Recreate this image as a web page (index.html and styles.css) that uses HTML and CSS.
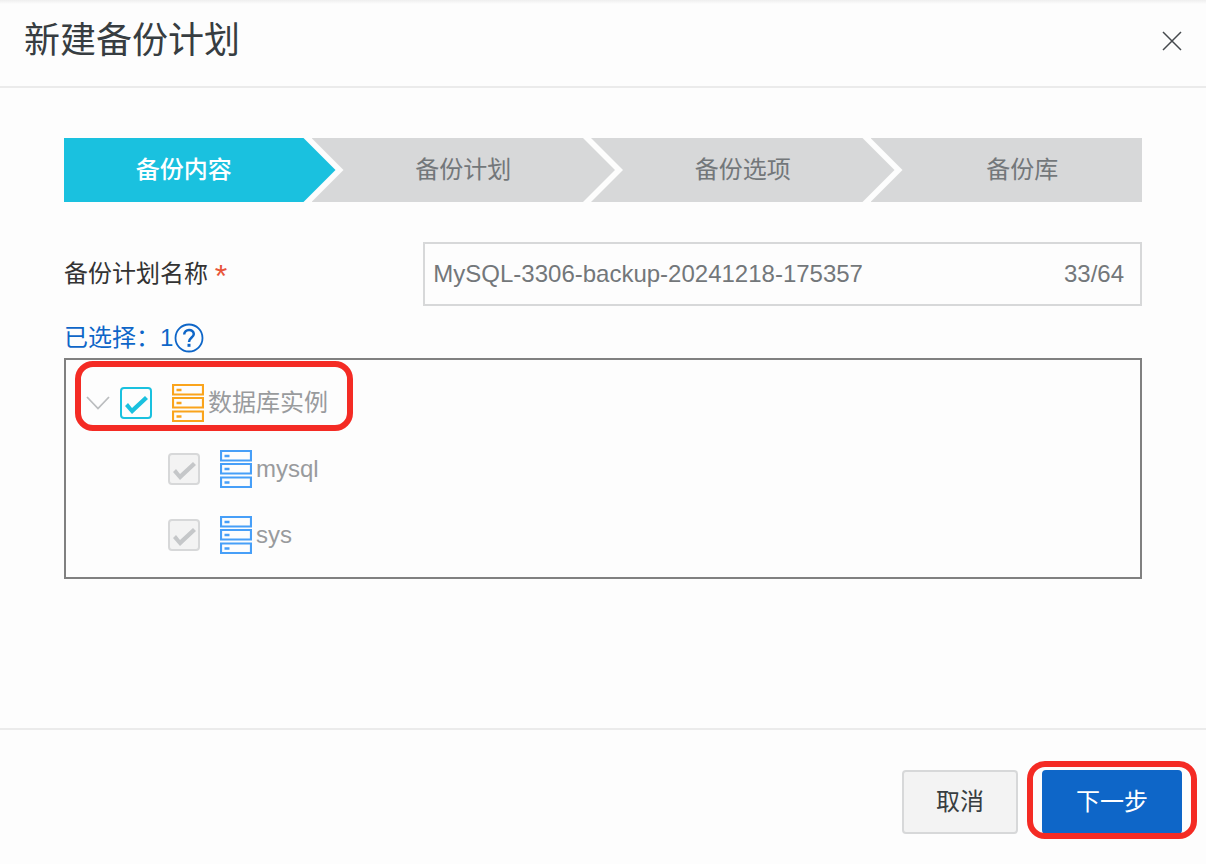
FILE: index.html
```html
<!DOCTYPE html>
<html lang="zh-CN">
<head>
<meta charset="utf-8">
<meta name="viewport" content="width=device-width, initial-scale=1">
<title>新建备份计划</title>
<link rel="stylesheet" href="styles.css">
</head>
<body>
<svg width="0" height="0" class="sprite" aria-hidden="true">
  <symbol id="server" viewBox="0 0 32 38">
    <g fill="none" stroke="currentColor">
      <path d="M1 1H31V10.500H1ZM1 14H31V23.500H1ZM1 27.500H31V37H1Z" stroke-width="2.200"/>
      <path d="M4.500 6H9.500M4.500 19H9.500M4.500 32.500H9.500" stroke-width="2.500"/>
    </g>
  </symbol>
</svg>
<main class="dialog">
  <header class="dialog-header">
    <h1 class="title">新建备份计划</h1>
    <button class="close" type="button" aria-label="关闭">
      <svg width="20" height="20" viewBox="0 0 20 20"><path d="M1 1L19 19M19 1L1 19" fill="none" stroke="currentColor" stroke-width="1.500"/></svg>
    </button>
  </header>

  <form class="dialog-body" id="plan">
    <ol class="steps">
      <li class="step active">备份内容</li>
      <li class="step">备份计划</li>
      <li class="step">备份选项</li>
      <li class="step">备份库</li>
    </ol>

    <div class="field">
      <label class="label" for="name">备份计划名称 <span class="required">*</span></label>
      <div class="input-box">
        <input class="input" id="name" type="text" maxlength="64" value="MySQL-3306-backup-20241218-175357">
        <span class="count">33/64</span>
      </div>
    </div>

    <div class="selected">
      <span>已选择：1</span>
      <svg class="help" width="30" height="30" viewBox="0 0 30 30" fill="none" stroke="currentColor">
        <circle cx="15" cy="15" r="13.500" stroke-width="1.800"/>
        <path d="M10.200 11.500C10.200 5.500 19.800 5.500 19.800 11C19.800 14.500 15 14.500 15 19" stroke-width="2.500"/>
        <path d="M15 20.800V23.800" stroke-width="3"/>
      </svg>
    </div>

    <ul class="tree">
      <li class="node highlight">
        <button class="toggle" type="button" aria-label="收起">
          <svg width="24" height="14" viewBox="0 0 24 14"><path d="M1 1L12 12.500L23 1" fill="none" stroke="currentColor" stroke-width="1.800"/></svg>
        </button>
        <input class="check" id="instance" type="checkbox" checked>
        <label class="node-label" for="instance"><svg class="server root" width="32" height="38"><use href="#server"/></svg>数据库实例</label>
      </li>
      <li class="node child">
        <input class="check" id="db-mysql" type="checkbox" checked disabled>
        <label class="node-label" for="db-mysql"><svg class="server" width="32" height="38"><use href="#server"/></svg>mysql</label>
      </li>
      <li class="node child">
        <input class="check" id="db-sys" type="checkbox" checked disabled>
        <label class="node-label" for="db-sys"><svg class="server" width="32" height="38"><use href="#server"/></svg>sys</label>
      </li>
    </ul>
  </form>

  <footer class="dialog-footer">
    <button class="btn" type="button">取消</button>
    <div class="next-wrap">
      <button class="btn primary" type="submit" form="plan">下一步</button>
    </div>
  </footer>
</main>
</body>
</html>
```

FILE: styles.css
```css
*,
*::before,
*::after {
  box-sizing: border-box;
}

body {
  margin: 0;
  background: #fdfdfd;
  color: #333;
  font-family: "Liberation Sans", "Noto Sans CJK SC", sans-serif;
  font-size: 24px;
  line-height: 36px;
}

button,
input {
  font: inherit;
  color: inherit;
}

.sprite {
  position: absolute;
}

.dialog {
  display: flex;
  flex-direction: column;
  min-height: 100vh;
  background: linear-gradient(#efefef, #fdfdfd 4px);
}

.dialog-header {
  display: flex;
  align-items: center;
  justify-content: space-between;
  padding: 14px 24px 18px;
  border-bottom: 2px solid #ebebeb;
}

.title {
  margin: 0;
  color: #373d41;
  font-size: 36px;
  font-weight: 400;
  line-height: 54px;
}

.close,
.toggle {
  display: flex;
  padding: 0;
  border: 0;
  background: none;
  cursor: pointer;
}

.close {
  color: #45494d;
}

.dialog-body {
  flex: 1;
  padding: 50px 64px;
}

.steps {
  display: flex;
  margin: 0 0 40px;
  padding: 0;
  list-style: none;
}

.step {
  flex: 1 1 0;
  height: 64px;
  margin-left: -24px;
  padding: 0 32px;
  background: #d7d8d9;
  color: #73777a;
  line-height: 64px;
  text-align: center;
  clip-path: polygon(0 0, calc(100% - 32px) 0, 100% 50%, calc(100% - 32px) 100%, 0 100%, 32px 50%);
}

.step:first-child {
  margin-left: 0;
  padding-left: 0;
  clip-path: polygon(0 0, calc(100% - 32px) 0, 100% 50%, calc(100% - 32px) 100%, 0 100%);
}

.step:last-child {
  padding-right: 0;
  clip-path: polygon(0 0, 100% 0, 100% 100%, 0 100%, 32px 50%);
}

.step.active {
  background: #1ac1df;
  color: #fff;
  font-weight: 500;
}

.field {
  display: grid;
  grid-template-columns: 1fr 2fr;
  align-items: center;
  margin-bottom: 14px;
}

.required {
  color: #e8553a;
  font-size: 32px;
  line-height: 24px;
  vertical-align: middle;
}

.input-box {
  display: flex;
  align-items: center;
  height: 64px;
  padding: 0 16px 0 8px;
  border: 2px solid #d7d8d9;
  color: #73777a;
}

.input {
  flex: 1;
  min-width: 0;
  padding: 0;
  border: 0;
  outline: 0;
  background: none;
}

.selected {
  display: flex;
  align-items: center;
  gap: 1px;
  margin-bottom: 2px;
  color: #0e66c8;
}

.tree {
  margin: 0;
  padding: 10px 8px 9px 20px;
  border: 2px solid #808080;
  color: #999b9d;
  list-style: none;
}

.node {
  display: flex;
  align-items: center;
  height: 66px;
}

.child {
  padding-left: 82px;
}

.toggle {
  margin-right: 10px;
  color: #bbbdbf;
}

.check {
  width: 32px;
  height: 32px;
  margin: 0 20px 0 0;
  border: 2px solid #1ac1df;
  border-radius: 4px;
  color: #1ac1df;
  appearance: none;
}

.check:disabled {
  border-color: #d7d8d9;
  background: #f3f3f3;
  color: #c5c7c9;
}

.check:checked::before {
  display: block;
  width: 28px;
  height: 28px;
  background: currentColor;
  clip-path: polygon(3px 17px, 6px 14px, 10px 19px, 23px 7px, 26px 10px, 10px 25px);
  content: "";
}

.node-label {
  display: flex;
  align-items: center;
  gap: 4px;
}

.server {
  color: #479ff8;
}

.server.root {
  color: #faa41c;
}

.highlight,
.next-wrap {
  position: relative;
}

.highlight::after,
.next-wrap::after {
  position: absolute;
  border: 6px solid #f42b24;
  border-radius: 18px;
  content: "";
  pointer-events: none;
}

.highlight::after {
  top: -9px;
  left: -11px;
  width: 278px;
  height: 70px;
}

.next-wrap::after {
  inset: -9px -15px -5px;
}

.dialog-footer {
  display: flex;
  justify-content: flex-end;
  gap: 24px;
  padding: 40px 24px 30px;
  border-top: 2px solid #ebebeb;
}

.btn {
  height: 64px;
  padding: 0 32px;
  border: 2px solid #d7d8d9;
  border-radius: 4px;
  background: #f3f3f3;
  color: #373d41;
  cursor: pointer;
}

.btn.primary {
  border-color: #0e66c8;
  background: #0e66c8;
  color: #fff;
}
```
